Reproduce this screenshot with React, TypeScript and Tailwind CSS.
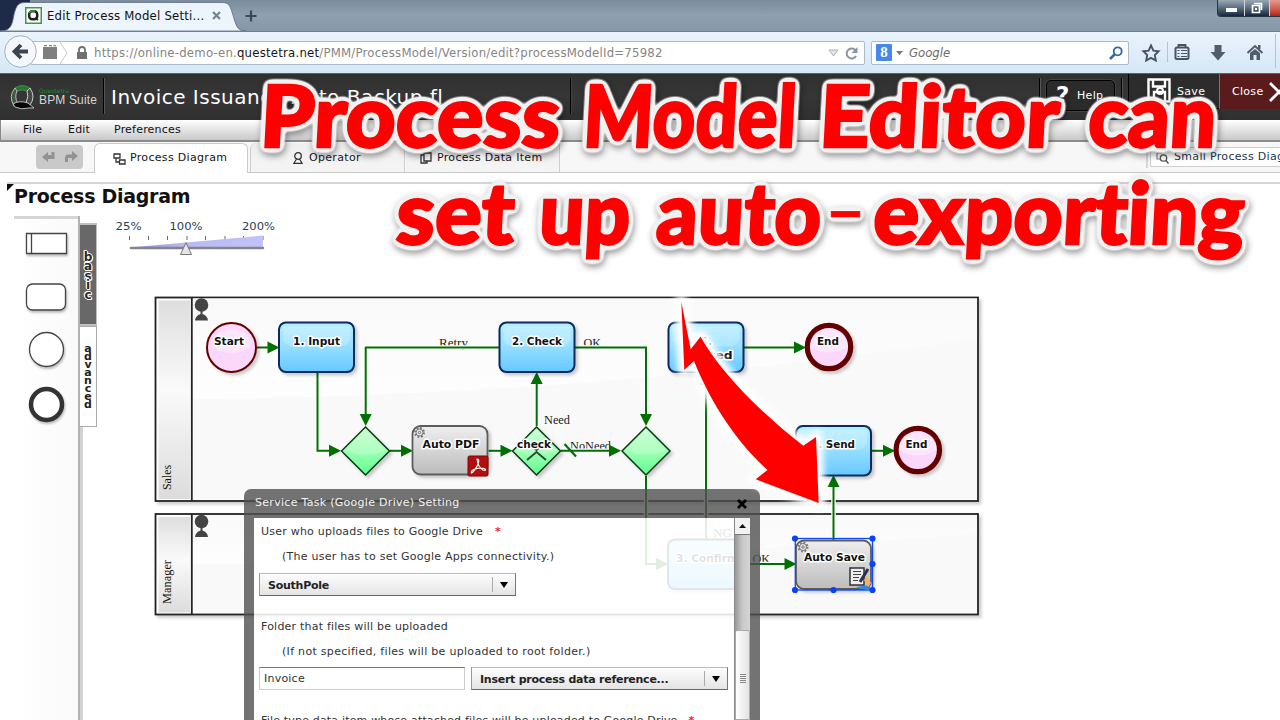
import type { ReactNode } from "react";

const verdana = "font-['DejaVu_Sans',sans-serif]";

function BrowserTabs() {
  return (
    <div className="relative flex h-[31px] shrink-0 items-start overflow-hidden bg-linear-to-b from-[#7b8c9c] via-[#8fa1b1] to-[#8596a6]">
      <svg className="absolute left-0 top-0" width="260" height="31" viewBox="0 0 260 31">
        <rect width="30" height="31" fill="#1d2b49" />
        <path d="M0 31C14 31 12 20 15 11C17 4 20 2.500 26 2.500H222C229 2.500 230 6 232 12C236 24 236 31 246 31Z" fill="#ecf4fc" stroke="#5d6d80" strokeWidth="0.800" />
      </svg>
      <div className="relative flex h-[31px] items-center pl-[25px]">
        <svg width="17" height="17" viewBox="0 0 17 17">
          <rect x="0.750" y="0.750" width="15.500" height="15.500" fill="#fff" stroke="#3f9a3f" strokeWidth="1.500" />
          <rect x="4.200" y="4.200" width="8" height="8" rx="3" fill="none" stroke="#222" strokeWidth="2.500" />
          <path d="M4 6Q5 3.500 10 4" fill="none" stroke="#3f9a3f" strokeWidth="1.500" />
          <path d="M10 11L13 13" stroke="#222" strokeWidth="2" />
        </svg>
        <span className="ml-[5px] w-[158px] whitespace-nowrap text-[13px] leading-4 tracking-[0.220px] text-[#111] font-['DejaVu_Sans_Condensed','DejaVu_Sans',sans-serif]">Edit Process Model Setti...</span>
        <svg className="ml-[7px]" width="9" height="9" viewBox="0 0 9 9"><path d="M1 1L8 8M8 1L1 8" stroke="#75828f" strokeWidth="2.200" /></svg>
        <svg className="ml-[24px]" width="12" height="12" viewBox="0 0 12 12"><path d="M6 0.500V11.500M0.500 6H11.500" stroke="#3c4856" strokeWidth="2.200" /></svg>
      </div>
      <div className="relative ml-auto flex h-[17px] overflow-hidden rounded-bl-[4px] border-b border-l border-[#26354a]">
        <div className="flex w-[27px] items-end justify-center border-r border-[#cfd8e0] bg-linear-to-b from-[#9aa7b4] via-[#5c6c7f] to-[#16263e] pb-[4px]"><i className="block h-[4px] w-[11px] bg-white" /></div>
        <div className="flex w-[25px] items-center justify-center border-r border-[#cfd8e0] bg-linear-to-b from-[#9aa7b4] via-[#5c6c7f] to-[#16263e]">
          <svg width="12" height="12" viewBox="0 0 12 12"><path d="M3 1.500H10.500V8M1.500 3.500H8.500V10.500H1.500Z" fill="none" stroke="#fff" strokeWidth="1.700" /><rect x="4" y="6" width="2" height="2" fill="#fff" /></svg>
        </div>
        <div className="w-[10px] bg-linear-to-b from-[#e69a8c] to-[#b51d10]" />
      </div>
    </div>
  );
}

function BrowserToolbar() {
  return (
    <div className="relative flex h-[43px] shrink-0 items-center border-b-[1.500px] border-t border-b-[#55616e] border-t-[#6d8093] bg-linear-to-b from-[#eaf3fc] to-[#d6e7f6] font-['DejaVu_Sans_Condensed','DejaVu_Sans',sans-serif]">
      <svg className="absolute left-0 top-0 z-10" width="42" height="41" viewBox="0 0 42 41">
        <circle cx="20.500" cy="19.500" r="15.800" fill="#f4f8fc" stroke="#9fb0c0" />
        <path d="M21 13L14.500 19.500L21 26M15 19.500H28" fill="none" stroke="#3b4653" strokeWidth="3.800" />
      </svg>
      <div className="ml-[30px] flex h-[24px] w-[835px] items-center rounded-[2px] border border-[#a9bccd] bg-white">
        <svg className="ml-[11px]" width="45" height="22" viewBox="0 0 45 22">
          <path d="M1 5H15V17H1ZM2 3H5V4.200H2ZM7 3H10V4.200H7ZM11.500 3H14V4.200H11.500Z" fill="#7f7f7f" />
          <path d="M18 0L25 11L18 22" fill="none" stroke="#c3c9d0" />
          <path d="M35 10H45V17H35Z" fill="#707070" />
          <path d="M37 10V8A3 3 0 0 1 43 8V10" fill="none" stroke="#707070" strokeWidth="1.800" />
        </svg>
        <span className="ml-[7px] whitespace-nowrap text-[13px] leading-5 tracking-[0.225px] text-[#858585]">https://online-demo-en.<span className="text-[#151515]">questetra.net</span>/PMM/ProcessModel/Version/edit?processModelId=75982</span>
        <svg className="ml-auto mr-[6px]" width="30" height="14" viewBox="0 0 30 14">
          <path d="M1 4H10L5.500 10Z" fill="#dde6ee" stroke="#a7b4c1" />
          <path d="M28 5A5 5 0 1 0 28 10" fill="none" stroke="#8795a4" strokeWidth="2" />
          <path d="M29.500 1V7H23.500Z" fill="#8795a4" />
        </svg>
      </div>
      <div className="ml-[6px] flex h-[24px] w-[258px] items-center rounded-[2px] border border-[#a9bccd] bg-white">
        <span className="ml-[4px] flex h-[17px] w-[16px] items-center justify-center rounded-[1px] bg-[#4787ed] text-[15px] font-bold leading-none text-white font-['Liberation_Serif',serif]">8</span>
        <svg className="ml-[4px]" width="7" height="4" viewBox="0 0 7 4"><path d="M0 0H7L3.500 4Z" fill="#777" /></svg>
        <span className="ml-[6px] text-[13px] italic text-[#6d6d6d]">Google</span>
        <svg className="ml-auto mr-[5px]" width="14" height="14" viewBox="0 0 14 14"><circle cx="8.700" cy="5.300" r="4" fill="none" stroke="#2d69a8" strokeWidth="1.800" /><path d="M6 8L1 13" stroke="#2d69a8" strokeWidth="2.500" /></svg>
      </div>
      <svg className="ml-[12px]" width="138" height="40" viewBox="1141 32 138 40">
        <path d="M1151 44.500L1153.400 49.600L1158.600 50.200L1154.800 54L1155.800 59.500L1151 56.800L1146.200 59.500L1147.200 54L1143.400 50.200L1148.600 49.600Z" fill="none" stroke="#47535f" strokeWidth="1.900" />
        <path d="M1167.500 41V61" stroke="#b5c3d1" />
        <path d="M1178.500 46V44H1185.500V46" fill="none" stroke="#47535f" strokeWidth="1.800" />
        <rect x="1175.500" y="46.500" width="13" height="11.500" rx="1.500" fill="none" stroke="#47535f" strokeWidth="2" />
        <path d="M1177.500 49.500H1179.500M1177.500 52.500H1179.500M1177.500 55.500H1179.500M1181 49.500H1187M1181 52.500H1187M1181 55.500H1187" stroke="#47535f" strokeWidth="1.200" />
        <path d="M1214.500 44H1221.500V51H1225.500L1218 59.500L1210.500 51H1214.500Z" fill="#515d69" />
        <path d="M1247.500 52L1255 45L1262.500 52" fill="none" stroke="#515d69" strokeWidth="2" />
        <path d="M1250 52L1255 48L1260 52V59H1256.500V54H1253.500V59H1250ZM1258 44H1260.500V48H1258Z" fill="#515d69" />
        <path d="M1275.500 33V67" stroke="#b5c3d1" />
      </svg>
    </div>
  );
}

function AppHeader() {
  return (
    <div className={`flex h-[46px] shrink-0 items-start bg-linear-to-b from-[#303030] via-[#363636] to-[#303030] text-white ${verdana}`}>
      <div className="flex h-[46px] w-[103px] items-center pl-[9px]">
        <svg width="26" height="26" viewBox="0 0 26 26">
          <path d="M6 4Q13 -1 21 4L20 8Q13 4 7 8Z" fill="#21772c" stroke="#8a8" strokeWidth="0.500" />
          <path d="M6 4Q-1 12 5 22L9 20Q5 13 8 7Z" fill="#3d5a42" stroke="#bbb" strokeWidth="1" />
          <path d="M21 4Q27 13 21 21L17 19Q20 12 18 7Z" fill="#484848" stroke="#ccc" strokeWidth="1" />
          <path d="M4 20Q10 16 19 19L25 24L20 24Q12 26 6 23Z" fill="#050505" stroke="#ccc" strokeWidth="0.900" />
        </svg>
        <div className="ml-[4px] flex flex-col">
          <span className="h-[6px] text-[6px] leading-[5px] text-[#1f8a2d]">Questetra</span>
          <span className="whitespace-nowrap text-[12px] leading-[12px] tracking-[0.150px] text-[#d5d5d5] font-['Liberation_Sans',sans-serif]">BPM Suite</span>
        </div>
      </div>
      <i className="mt-[4px] h-[36px] w-[2px] border-l border-black bg-[#555]" />
      <span className="ml-[6px] w-[459px] whitespace-nowrap pt-[8px] text-[20px] leading-[30px] tracking-[0.500px]">Invoice Issuance Auto Backup fl</span>
      <i className="mt-[4px] h-[36px] w-[2px] border-l border-black bg-[#454545]" />
      <i className="ml-[467px] mt-[4px] h-[36px] w-[2px] border-l border-black bg-[#555]" />
      <div className="ml-[5px] mt-[6px] flex h-[31px] w-[69px] items-center rounded-[5px] border border-black bg-[#2b2b2b] pl-[9px] shadow-[0_0_0_1px_#444]">
        <span className="w-[21px] text-[23px] font-bold leading-none">?</span>
        <span className="pt-[2px] text-[11px] tracking-[0.300px]">Help</span>
      </div>
      <i className="ml-[6px] mt-[4px] h-[36px] w-[2px] border-l border-black bg-[#555]" />
      <div className="ml-[5px] flex h-[35px] w-[91px] items-center border-b border-l border-black bg-[#2c2c2c] pl-[18px]">
        <svg className="-mt-px" width="24" height="25" viewBox="0 0 24 25">
          <path d="M1.500 1.500H22.500V23.500H4L1.500 21ZM6 2V8.500H18V2M7 23V14H18V23" fill="none" stroke="#fff" strokeWidth="2.400" />
          <circle cx="13" cy="13" r="3" fill="none" stroke="#fff" strokeWidth="2" />
        </svg>
        <span className="ml-[6px] pt-[2px] text-[11px] tracking-[0.300px]">Save</span>
      </div>
      <div className="flex h-[35px] flex-1 items-center overflow-hidden border-l border-[#777] bg-[#5a1b1c] pl-[12px]">
        <span className="pt-[2px] text-[11px] tracking-[0.300px]">Close</span>
        <svg className="ml-[6px] shrink-0" width="20" height="20" viewBox="0 0 20 20"><path d="M1 1L10 10L1 19M19 1L10 10L19 19" fill="none" stroke="#fff" strokeWidth="2.800" /></svg>
      </div>
    </div>
  );
}

function Menus() {
  return (
    <div className={`flex h-[22px] shrink-0 items-center border-b-2 border-l border-[#8b8b8b] bg-linear-to-b from-white to-[#c9c9c9] text-[11px] tracking-[0.200px] text-[#111] ${verdana}`}>
      <span className="ml-[22px] w-[45px]">File</span>
      <span className="w-[46px]">Edit</span>
      <span>Preferences</span>
    </div>
  );
}

function Tabs() {
  return (
    <div className={`flex h-[31px] shrink-0 items-end border-b border-[#c9c9c9] bg-[#f7f7f7] text-[11px] tracking-[0.320px] text-[#161616] ${verdana}`}>
      <div className="mb-[3px] ml-[36px] flex h-[24px] w-[47px] items-center justify-center gap-[8px] rounded-[4px] bg-[#c9c9c9]">
        <svg width="14" height="12" viewBox="0 0 14 12"><path d="M0 6L6 1V4H9.500V1H12.500V8H6V11Z" fill="#929292" /></svg>
        <svg width="14" height="12" viewBox="0 0 14 12"><path d="M14 5L8 0V3.500H4Q1 3.500 1 7V11H4V7H8V10Z" fill="#929292" /></svg>
      </div>
      <div className="-mb-px ml-[11px] flex h-[30px] w-[154px] items-center rounded-t-[6px] border-x border-t border-[#cacaca] bg-white pl-[18px]">
        <svg width="13" height="12" viewBox="0 0 13 12"><path d="M1 1H7V5H1ZM6.500 7H12V11H6.500ZM3 5V9H6.500" fill="none" stroke="#333" strokeWidth="1.300" /></svg>
        <span className="ml-[4px] whitespace-nowrap">Process Diagram</span>
      </div>
      <div className="ml-[2px] flex h-[29px] w-[155px] items-center rounded-tl-[6px] border-x border-[#cfcfcf] bg-linear-to-b from-[#efefef] to-[#f5f5f5] pl-[42px] pt-px">
        <svg width="10" height="12" viewBox="0 0 10 12"><circle cx="5" cy="4" r="3.300" fill="none" stroke="#333" strokeWidth="1.300" /><path d="M3.500 7L1 11.300H9L6.500 7" fill="none" stroke="#333" strokeWidth="1.200" /></svg>
        <span className="ml-[6px]">Operator</span>
      </div>
      <div className="ml-px flex h-[29px] w-[154px] items-center border-r border-[#cfcfcf] bg-linear-to-b from-[#efefef] to-[#f5f5f5] pl-[14px] pt-px">
        <svg width="12" height="12" viewBox="0 0 12 12"><path d="M4 1H11V9H4ZM4 3H1V11H7V9" fill="none" stroke="#333" strokeWidth="1.300" /></svg>
        <span className="ml-[5px] whitespace-nowrap">Process Data Item</span>
      </div>
      <div className="mb-[4px] ml-auto flex h-[22px] w-[134px] items-center overflow-hidden border-l-2 border-[#d5d5d5] pl-[2px]">
        <div className="flex h-[20px] w-[170px] shrink-0 items-center border border-[#d0d0d0] bg-white pl-[5px] pt-px">
          <svg className="shrink-0" width="13" height="12" viewBox="0 0 13 12"><path d="M6 1H1V7H4" fill="none" stroke="#888" strokeWidth="1.200" /><circle cx="7.500" cy="6" r="3.200" fill="none" stroke="#555" strokeWidth="1.300" /><path d="M10 8.500L12.500 11.500" stroke="#555" strokeWidth="1.500" /></svg>
          <span className="ml-[5px] whitespace-nowrap text-[#20384f]">Small Process Diagram</span>
        </div>
      </div>
    </div>
  );
}

function Palette() {
  return (
    <div className="flex">
      <div className="h-[510px] w-[64px] border-t-[3px] border-[#d5d5d5] bg-linear-to-r from-white to-[#fafafa] pl-[11px]">
        <svg width="46" height="210" viewBox="25 219 46 210">
          <g fill="#fff" stroke="#444" strokeWidth="1.300" filter="drop-shadow(1px 2px 1px rgba(0,0,0,.25))">
            <path d="M26.500 233.500H66.500V253.500H26.500ZM31.500 233.500V253.500" />
            <rect x="26.500" y="284" width="39" height="26" rx="6" />
            <circle cx="46.500" cy="349.500" r="17" />
            <circle cx="46.500" cy="404.500" r="15.500" strokeWidth="4.500" stroke="#333" />
          </g>
        </svg>
      </div>
      <div className={`flex h-[510px] w-[18px] flex-col items-start border-l-2 border-[#b2b2b2] pt-[7px] font-bold ${verdana}`}>
        <div className="flex h-[103px] w-[17px] flex-col items-center justify-center border-y-2 border-r border-[#c0c0c0] bg-[#686868] pt-[4px] text-[12px] leading-[9.500px] text-[#2b2b2b] [text-shadow:1px_0_#fff,-1px_0_#fff,0_1px_#fff,0_-1px_#fff,1px_1px_#fff,-1px_-1px_#fff]">
          {"basic".split("").map((c, i) => <span key={i}>{c}</span>)}
        </div>
        <div className="flex h-[101px] w-[17px] shrink-0 flex-col items-center justify-center border border-l-0 border-[#aaa] bg-white text-[11px] leading-[8px] text-[#222]">
          {"advanced".split("").map((c, i) => <span key={i}>{c}</span>)}
        </div>
        <i className="w-[3px] flex-1 bg-[#d2d2d2]" />
      </div>
    </div>
  );
}

function ZoomSlider() {
  return (
    <svg className="ml-[16px] mt-[2px]" width="165" height="40" viewBox="112 218 165 40">
      <defs><linearGradient id="ramp"><stop offset="0" stopColor="#8d8dd8" /><stop offset="0.400" stopColor="#b9b9f2" /><stop offset="1" stopColor="#c3c3fb" /></linearGradient></defs>
      <g fontSize="10.500" fill="#2c4250" className={verdana}>
        <text x="115.500" y="230" textLength="26" lengthAdjust="spacingAndGlyphs">25%</text>
        <text x="169.500" y="230" textLength="33" lengthAdjust="spacingAndGlyphs">100%</text>
        <text x="242" y="230" textLength="33" lengthAdjust="spacingAndGlyphs">200%</text>
      </g>
      <path d="M129.500 236V240M148.500 236V240M167.500 236V240M187 236V240M205.500 236V240M225 236V240M243.500 236V240M263 236V240" stroke="#666" />
      <path d="M130 247.500L263 235.500V247Z" fill="url(#ramp)" />
      <path d="M131 248H263" stroke="#858589" strokeWidth="2.500" strokeLinecap="round" />
      <path d="M186 242.500L191.500 254.500H180.500Z" fill="#e6e6e6" stroke="#777" />
    </svg>
  );
}

function Flow({ d, tip }: { d: string; tip: [number, number, number] }) {
  return (
    <g>
      <path d={d} fill="none" stroke="#fff" strokeWidth="4.500" />
      <path d={d} fill="none" stroke="#007000" strokeWidth="2" />
      <path d="M0 0L-12 -6V6Z" transform={`translate(${tip[0]} ${tip[1]}) rotate(${tip[2]})`} fill="#007000" />
    </g>
  );
}

function Label({ x, y, w, children }: { x: number; y: number; w: number; children: ReactNode }) {
  return <text x={x} y={y} textLength={w} lengthAdjust="spacingAndGlyphs" textAnchor="middle" fontSize="11" fontWeight="bold" fill="#111" stroke="#fff" strokeWidth="3" strokeLinejoin="round" paintOrder="stroke" className={verdana}>{children}</text>;
}

function Note({ x, y, w, children }: { x: number; y: number; w: number; children: string }) {
  return <text x={x} y={y} textLength={w} lengthAdjust="spacingAndGlyphs" fontSize="12.500" fill="#222" className="font-['Liberation_Serif',serif]">{children}</text>;
}

function Task({ x, y, children }: { x: number; y: number; children?: ReactNode }) {
  return (
    <g>
      <rect x={x} y={y} width="75" height="49.500" rx="7" fill="url(#blue)" stroke="#072a60" strokeWidth="2" filter="url(#soft)" />
      <path d={`M${x + 4} ${y + 4}H${x + 71}V${y + 17}Q${x + 70} ${y + 23} ${x + 60} ${y + 24}H${x + 15}Q${x + 5} ${y + 23} ${x + 4} ${y + 17}Z`} fill="#fff" opacity="0.220" />
      {children}
    </g>
  );
}

function ServiceTask({ x, y }: { x: number; y: number }) {
  return (
    <g>
      <rect x={x} y={y} width="75" height="48.500" rx="8" fill="url(#grey)" stroke="#5c5c5c" strokeWidth="1.800" filter="url(#soft)" />
      <g transform={`translate(${x + 7} ${y + 6.500})`} fill="none" stroke="#777">
        <circle r="4.500" strokeWidth="2" strokeDasharray="1.800 1.730" />
        <circle r="3.500" /><circle r="1.200" />
      </g>
    </g>
  );
}

function Gateway({ x }: { x: number }) {
  return (
    <g>
      <path d={`M${x} 427L${x + 24} 451L${x} 475L${x - 24} 451Z`} fill="url(#green)" stroke="#0b3812" strokeWidth="1.500" filter="url(#soft)" />
      <path d={`M${x - 20} 451L${x} 430L${x + 20} 451Q${x} 458 ${x - 20} 451Z`} fill="#fff" opacity="0.180" />
    </g>
  );
}

function Circle({ x, y, end }: { x: number; y: number; end?: boolean }) {
  return (
    <g>
      <circle cx={x} cy={y} r={end ? 21.700 : 24.500} fill="#fcd7fc" stroke="#640000" strokeWidth={end ? 5.200 : 2} filter="url(#soft)" />
      <path d={`M${x - 19} ${y}Q${x - 19} ${y - 18} ${x} ${y - 18}T${x + 19} ${y}Q${x} ${y + 11} ${x - 19} ${y}Z`} fill="#fff" opacity="0.350" />
    </g>
  );
}

function Lane({ y, h, name, nameY, w }: { y: number; h: number; name: string; nameY: number; w: number }) {
  return (
    <g>
      <rect x="155.500" y={y} width="822.500" height={h} fill="#f9f9f9" stroke="#222" strokeWidth="1.800" filter="url(#soft)" />
      <rect x="157" y={y + 1.500} width="34" height={h - 3} fill="#fff" />
      <rect x="158.500" y={y + 3} width="31.500" height={h - 5} fill="url(#lane)" />
      <path d={`M191.800 ${y}V${y + h}`} stroke="#222" strokeWidth="1.800" />
      <path d={`M193 ${y + h * 0.500}Q600 ${y + h * 0.480} 977 ${y + h * 0.200}V${y + 1}H193Z`} fill="url(#shine)" />
      <text transform={`translate(171 ${nameY}) rotate(-90)`} textLength={w} lengthAdjust="spacingAndGlyphs" fontSize="13" fill="#111" className="font-['Liberation_Serif',serif]">{name}</text>
      <g fill="#444"><circle cx="201.500" cy={y + 7.500} r="6.800" /><path d={`M200.500 ${y + 13}H202.500V${y + 16.500}Q207.500 ${y + 18} 208 ${y + 23}H195Q195.500 ${y + 18} 200.500 ${y + 16.500}Z`} /></g>
    </g>
  );
}

function Diagram() {
  return (
    <svg className="absolute left-[150px] top-[117px]" width="840" height="335" viewBox="150 290 840 335">
      <defs>
        <linearGradient id="blue" x2="0" y2="1"><stop stopColor="#b6efff" /><stop offset="0.450" stopColor="#98e0ff" /><stop offset="1" stopColor="#66c8ff" /></linearGradient>
        <linearGradient id="grey" x2="0" y2="1"><stop stopColor="#eee" /><stop offset="1" stopColor="#bcbcbc" /></linearGradient>
        <linearGradient id="green" x2="0" y2="1"><stop stopColor="#c5ffd0" /><stop offset="0.500" stopColor="#9effb4" /><stop offset="1" stopColor="#5fff90" /></linearGradient>
        <linearGradient id="lane" x2="0" y2="1"><stop stopColor="#dedede" /><stop offset="0.450" stopColor="#fafafa" /><stop offset="1" stopColor="#dcdcdc" /></linearGradient>
        <linearGradient id="shine" x2="0" y2="1"><stop stopColor="#f9f9f9" /><stop offset="1" stopColor="#fefefe" /></linearGradient>
        <filter id="soft" x="-10%" y="-10%" width="125%" height="130%"><feDropShadow dx="2.500" dy="2.500" stdDeviation="1.500" floodOpacity="0.200" /></filter>
      </defs>
      <Lane y={297.500} h={203.500} name="Sales" nameY={490} w={25} />
      <Lane y={514} h={100.500} name="Manager" nameY={604} w={44} />

      <Note x={439} y={346.500} w={29}>Retry</Note>
      <Note x={583.500} y={346.500} w={17.500}>OK</Note>
      <Note x={544} y={424} w={26}>Need</Note>
      <Note x={570} y={450} w={41}>NoNeed</Note>
      <Note x={713} y={537} w={19}>NG</Note>
      <Note x={752.500} y={562.500} w={17.500}>OK</Note>

      <Flow d="M257 347.500H270" tip={[279.500, 347.500, 0]} />
      <Flow d="M317.500 373V450.800H331" tip={[341, 450.800, 0]} />
      <Flow d="M499 347.500H365.700V417" tip={[365.700, 426, 90]} />
      <Flow d="M390 450.800H403" tip={[413, 450.800, 0]} />
      <Flow d="M488.500 450.800H503" tip={[512.500, 450.800, 0]} />
      <Flow d="M536.700 426V382" tip={[536.700, 372, -90]} />
      <Flow d="M561 450.800H611" tip={[621, 450.800, 0]} />
      <Flow d="M575 347.500H646V417" tip={[646, 426, 90]} />
      <Flow d="M646 476V564H658" tip={[668, 564, 0]} />
      <Flow d="M706 539V382" tip={[706, 373, -90]} />
      <Flow d="M744 347.500H797" tip={[806, 347.500, 0]} />
      <Flow d="M743 564H787" tip={[796.500, 564, 0]} />
      <Flow d="M833.500 540V485" tip={[833.500, 475, -90]} />
      <Flow d="M872 450.800H885" tip={[895, 450.800, 0]} />
      <path d="M564.500 444L576 456.500" stroke="#007000" strokeWidth="2.200" />

      <Circle x={231.500} y={347.500} />
      <Label x={229} y={345} w={30}>Start</Label>
      <Task x={279} y={322.500}><Label x={316.500} y={345} w={47}>1. Input</Label></Task>
      <Task x={499.500} y={322.500}><Label x={537} y={345} w={50}>2. Check</Label></Task>
      <Task x={668.500} y={322.500}><Label x={706} y={345} w={12}>5.</Label><Label x={707} y={359} w={51}>Printed</Label></Task>
      <Task x={796} y={426}><Label x={833} y={448} w={44}>6. Send</Label></Task>
      <Task x={668} y={539.500}><Label x={707} y={561.500} w={62}>3. Confirm</Label></Task>
      <Gateway x={365.500} /><Gateway x={536.500} /><Gateway x={646} />
      <path d="M527 460L536.500 452L546 460M530 445L536.500 450L541 446" fill="none" stroke="#264d2d" strokeWidth="1.800" />
      <Label x={534} y={447.500} w={34}>check</Label>
      <ServiceTask x={412.500} y={426} />
      <Label x={451} y={448} w={57}>Auto PDF</Label>
      <rect x="468" y="456" width="20" height="20" rx="1.500" fill="#b10f0f" stroke="#7a0808" />
      <path d="M477 459Q480 459 478 464Q475 471 471.500 473Q470 471 475 469Q481 467 485 469Q487 471 483 470Q478 467 477 459Z" fill="none" stroke="#fff" strokeWidth="1.100" />
      <Circle x={829} y={347} end /><Label x={828} y={345} w={22}>End</Label>
      <Circle x={917.800} y={450} end /><Label x={916.500} y={448} w={22}>End</Label>

      <ServiceTask x={796} y={540.500} />
      <Label x={834.500} y={561} w={61}>Auto Save</Label>
      <rect x="850" y="568" width="14" height="17" fill="#eee" stroke="#333" strokeWidth="1.500" />
      <path d="M853 571.500H861M853 574.500H861M853 577.500H859M853 580.500H858" stroke="#444" strokeWidth="1.200" />
      <path d="M856 587L870 585V589H860Z" fill="#3787d9" />
      <path d="M864 580L867 576L871 583L868 587Z" fill="#f3b266" />
      <path d="M860 582L868 569" stroke="#2b2f55" strokeWidth="3" />
      <rect x="795.300" y="538.500" width="77.200" height="51.500" fill="none" stroke="#0b48ff" strokeWidth="1.300" />
      <g fill="#0b40ff">{[[795, 538.500], [872.500, 538.500], [872.500, 564], [872.500, 590], [833.500, 590], [795, 590]].map(([x, y]) => <circle key={`${x}-${y}`} cx={x} cy={y} r="3.100" />)}</g>
    </svg>
  );
}

function SelectBox({ children }: { children: string }) {
  return (
    <div className="flex h-[23px] w-[257px] shrink-0 items-center border border-b-[#666] border-l-[#999] border-r-[#777] border-t-[#bbb] bg-linear-to-b from-[#fdfdfd] to-[#e4e4e4] pl-[8px] text-[11px] font-bold tracking-[-0.250px] text-[#222]">
      <span className="flex-1 whitespace-nowrap pt-[3px]">{children}</span>
      <i className="h-[15px] w-px bg-[#aaa]" />
      <svg className="mx-[7px]" width="8" height="6" viewBox="0 0 8 6"><path d="M0 0H8L4 6Z" fill="#000" /></svg>
    </div>
  );
}

function SettingDialog() {
  return (
    <div className={`absolute left-[244px] top-[316px] flex h-[231px] w-[516px] flex-col text-[11px] tracking-[0.220px] text-[#333] ${verdana}`}>
      <div className="flex h-[29px] shrink-0 items-center rounded-t-[7px] bg-[#505050]/80 pl-[11px] pr-[13px] text-[#f2f2f2]">
        <span className="flex-1 tracking-[0.290px]">Service Task (Google Drive) Setting</span>
        <svg width="10" height="10" viewBox="0 0 10 10"><path d="M1 1L9 9M9 1L1 9" stroke="#000" strokeWidth="2.800" /></svg>
      </div>
      <div className="flex min-h-0 flex-1 border-x-[10px] border-[#505050]/80 bg-clip-padding">
        <div className="flex min-w-0 flex-1 flex-col bg-white/88 pl-[5px]">
          <div className="mt-[6px] flex h-[16px] items-center gap-[12px] pl-[2px]"><span>User who uploads files to Google Drive</span><span className="font-bold text-[#f22]">*</span></div>
          <div className="mt-[9px] h-[16px] pl-[23px] leading-4 tracking-[0.260px]">(The user has to set Google Apps connectivity.)</div>
          <div className="mt-[8px]"><SelectBox>SouthPole</SelectBox></div>
          <div className="mt-[23px] h-[16px] pl-[2px] leading-4">Folder that files will be uploaded</div>
          <div className="mt-[9px] h-[16px] pl-[23px] leading-4 tracking-[0.300px]">(If not specified, files will be uploaded to root folder.)</div>
          <div className="mt-[7px] flex gap-[6px]">
            <div className="h-[23px] w-[206px] shrink-0 border border-[#ccc] border-t-[#777] bg-white pl-[4px] leading-[22px]">Invoice</div>
            <SelectBox>Insert process data reference...</SelectBox>
          </div>
          <div className="mt-[23px] flex h-[16px] shrink-0 items-center gap-[11px] whitespace-nowrap pl-[2px] tracking-[0.180px]"><span>File type data item whose attached files will be uploaded to Google Drive</span><span className="font-bold text-[#f22]">*</span></div>
        </div>
        <div className="flex w-[16px] flex-col border-l border-[#888] bg-linear-to-r from-[#999] via-[#c9c9c9] to-[#d5d5d5]">
          <div className="flex h-[17px] items-center justify-center border-b border-[#777] bg-[#f2f2f2]"><svg width="7" height="4" viewBox="0 0 7 4"><path d="M3.500 0L7 4H0Z" fill="#111" /></svg></div>
          <div className="mt-[95px] flex flex-1 flex-col items-center rounded-t-[2px] border border-[#aaa] bg-linear-to-r from-white to-[#e3e3e3] pt-[43px]">
            {[0, 1, 2, 3, 4].map((i) => <i key={i} className="mb-px h-px w-[6px] bg-[#888]" />)}
          </div>
        </div>
      </div>
    </div>
  );
}

const words: [string, number, number, number][] = [
  ["Process", 259, 147, 300], ["Model", 582, 147, 213], ["Editor", 818, 147, 240], ["can", 1087, 147, 128],
  ["set", 395, 243.500, 118], ["up", 538, 243.500, 91], ["auto", 655, 243.500, 165], ["exporting", 872, 243.500, 371],
];

function Callout() {
  const arrow = "M681.300 301.700L684.300 370L694 361C708 396 732 438 767.500 470L755.700 479.300L818.700 503L816 437L803.300 445.700C765 416 723 376 700.500 336.700L690.700 349.300Z";
  return (
    <svg className="pointer-events-none absolute left-0 top-0" width="1280" height="720" viewBox="0 0 1280 720">
      <defs>
        <filter id="glow" x="-20%" y="-20%" width="140%" height="140%"><feGaussianBlur stdDeviation="3" /></filter>
        <filter id="outline" filterUnits="userSpaceOnUse" x="230" y="50" width="1050" height="240" colorInterpolationFilters="sRGB">
          <feGaussianBlur in="SourceAlpha" stdDeviation="3" result="spread" />
          <feComponentTransfer in="spread" result="mask"><feFuncA type="linear" slope="12" intercept="-0.350" /></feComponentTransfer>
          <feFlood floodColor="#f1f1f1" />
          <feComposite in2="mask" operator="in" result="halo" />
          <feDropShadow in="halo" dx="1" dy="3" stdDeviation="3" floodOpacity="0.400" result="raised" />
          <feMerge><feMergeNode in="raised" /><feMergeNode in="SourceGraphic" /></feMerge>
        </filter>
      </defs>
      <path d={arrow} fill="#fff" stroke="#fff" strokeWidth="13" strokeLinejoin="round" filter="url(#glow)" />
      <path d={arrow} fill="#f00" />
      <g fontSize="85.500" fontWeight="900" fill="#f00" stroke="#f00" strokeWidth="2.500" filter="url(#outline)" className="font-['Lato',sans-serif] [font-variant-ligatures:none]">
        {words.map(([t, x, y, w]) => <text key={t} transform={`translate(${x} ${y}) skewX(-3)`} textLength={w} lengthAdjust="spacingAndGlyphs">{t}</text>)}
        <text x="824" y="237" fontSize="78" fontWeight="400" strokeWidth="0.500" textLength="43" lengthAdjust="spacingAndGlyphs">-</text>
      </g>
    </svg>
  );
}

export default function App() {
  return (
    <div className="relative flex h-[720px] w-[1280px] flex-col overflow-hidden bg-white">
      <BrowserTabs />
      <BrowserToolbar />
      <AppHeader />
      <Menus />
      <Tabs />
      <main className="relative min-h-0 flex-1 pt-[9px]">
        <div className="ml-[7px] h-[34px] border-t-2 border-[#d5d5d5]">
          <div className="flex">
            <svg width="7" height="7" viewBox="0 0 7 7"><path d="M0 0H7L0 7Z" fill="#111" /></svg>
            <h1 className={`text-[19px] font-bold leading-[25px] tracking-[-0.280px] text-[#111] ${verdana}`}>Process Diagram</h1>
          </div>
        </div>
        <div className="flex items-start pl-[14px]">
          <Palette />
          <ZoomSlider />
        </div>
        <Diagram />
        <SettingDialog />
      </main>
      <Callout />
    </div>
  );
}
